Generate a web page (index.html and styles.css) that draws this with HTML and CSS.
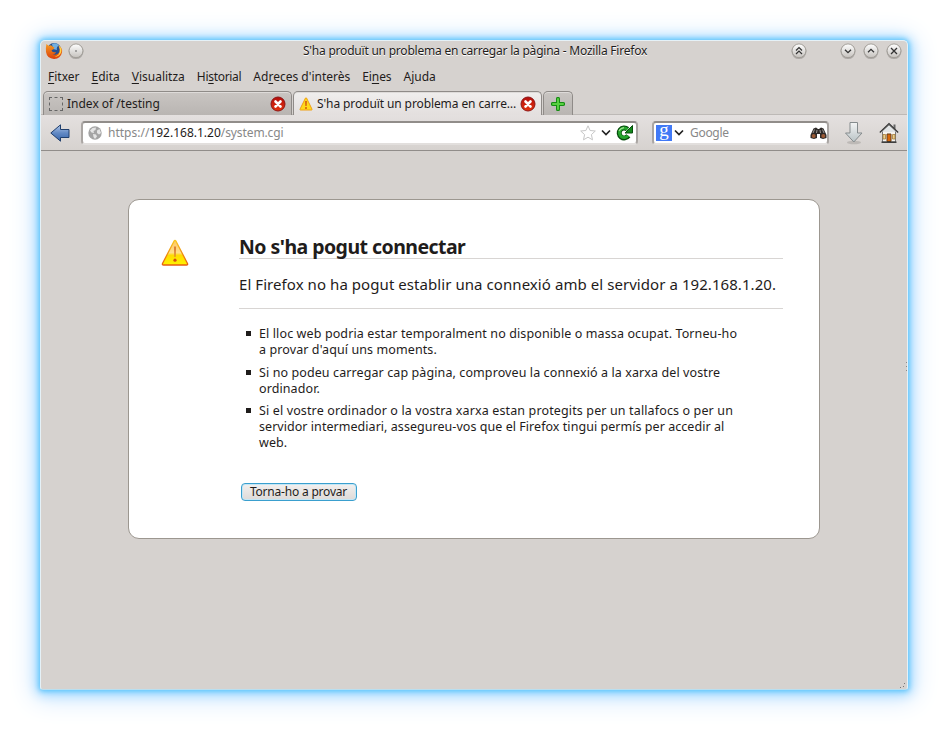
FILE: index.html
```html
<!DOCTYPE html>
<html lang="ca">
<head>
<meta charset="utf-8">
<title>S'ha produït un problema en carregar la pàgina - Mozilla Firefox</title>
<link rel="stylesheet" href="styles.css">
</head>
<body>
<svg class="defs" width="0" height="0" aria-hidden="true">
  <defs>
    <linearGradient id="gBtn" x1="0" y1="0" x2="0" y2="1"><stop offset="0" stop-color="#fff"/><stop offset="1" stop-color="#c5c1bd"/></linearGradient>
    <linearGradient id="gWarn" x1="0" y1="0" x2="0" y2="1"><stop offset="0" stop-color="#ffc861"/><stop offset=".5" stop-color="#ffdf8a"/><stop offset=".6" stop-color="#ffdc00"/><stop offset="1" stop-color="#fff200"/></linearGradient>
    <linearGradient id="gWarnEdge" x1="0" y1="0" x2="0" y2="1"><stop offset="0" stop-color="#f9c81c"/><stop offset="1" stop-color="#e65c0c"/></linearGradient>
    <linearGradient id="gBlue" x1="0" y1="0" x2="0" y2="1"><stop offset="0" stop-color="#b3c8e8"/><stop offset=".5" stop-color="#6289c4"/><stop offset="1" stop-color="#3765aa"/></linearGradient>
    <linearGradient id="gRed" x1="0" y1="0" x2="0" y2="1"><stop offset="0" stop-color="#b20d0d"/><stop offset="1" stop-color="#e3330c"/></linearGradient>
    <linearGradient id="gDown" x1="0" y1="0" x2="0" y2="1"><stop offset="0" stop-color="#f4f5f5"/><stop offset="1" stop-color="#b8c2c5"/></linearGradient>
    <linearGradient id="gFox" x1="0" y1="0" x2="0" y2="1"><stop offset="0" stop-color="#f79b22"/><stop offset="1" stop-color="#d9400c"/></linearGradient>
    <symbol id="warn" viewBox="0 0 28 28"><path d="M15 2.200 26.500 24.500Q27 26 25.500 26H2.500Q1 26 1.500 24.500L13 2.200Q14 .8 15 2.200z" fill="url(#gWarn)" stroke="url(#gWarnEdge)" stroke-width="1.300" stroke-linejoin="round"/><path d="M12.900 7.500h2.200l-.5 10.500h-1.200z" fill="#dd8133"/><circle cx="14" cy="21.200" r="1.600" fill="#d4500f"/></symbol>
    <symbol id="warnSmall" viewBox="0 0 14 14"><path d="M7.500 1 13 12.200Q13.300 13 12.500 13H1.500Q.7 13 1 12.200L6.500 1Q7 .3 7.500 1z" fill="#ffd91a" stroke="#f0a015" stroke-linejoin="round"/><path d="M6.200 4h1.600L7.600 9H6.400z" fill="#d2500c"/><circle cx="7" cy="11" r=".95" fill="#d2500c"/></symbol>
    <symbol id="close" viewBox="0 0 16 16"><circle cx="8" cy="8" r="7" fill="url(#gRed)" stroke="#8d1515"/><path d="M5.500 5.500l5 5M10.500 5.500l-5 5" stroke="#fff" stroke-width="2.600" stroke-linecap="round"/></symbol>
    <symbol id="knob" viewBox="0 0 18 18"><circle cx="9" cy="9.600" r="7.500" fill="#8b8783" opacity=".55"/><circle cx="9" cy="8.800" r="6.900" fill="url(#gBtn)" stroke="#99958f" stroke-width=".8"/></symbol>
  </defs>
</svg>
<div class="window">
  <header class="titlebar">
    <svg class="fox" width="18" height="18" viewBox="0 0 18 18"><circle cx="9.200" cy="8" r="7" fill="#254f90"/><path d="M7 2Q11-.2 14 3.500Q11 5 12 8L8 7z" fill="#71afe0"/><path d="M1.400 2 3.600 3.700 6 3.200Q8 5 9.500 5.500L8.500 7.300 6.500 8.200Q7 10.500 9.400 10.300L11 9.900Q10 12.500 7.600 12Q11.800 14 14.300 10.300Q15.400 7 13.300 3.200Q18 6 17 10.500Q15.500 17 9 16.900Q2 16.600 1 10Q.7 5 1.400 2z" fill="url(#gFox)"/><path d="M14 3.500Q17.500 7 15.800 11Q14 14.800 9.500 14.600Q15 13.500 15 8z" fill="#ffd64a"/></svg>
    <svg class="dot" width="18" height="18"><use href="#knob"/><circle cx="9" cy="9" r=".8" fill="#555"/></svg>
    <div class="caption"><span class="t t-title">S'ha produït un problema en carregar la pàgina - Mozilla Firefox</span></div>
    <svg class="k1" width="18" height="18"><use href="#knob"/><path d="M6 8.500 9 5.500l3 3M6 12l3-3 3 3" fill="none" stroke="#333" stroke-width="1.200"/></svg>
    <svg class="k2" width="18" height="18"><use href="#knob"/><path d="M6 7.700l3 3 3-3" fill="none" stroke="#333" stroke-width="1.300"/></svg>
    <svg class="k3" width="18" height="18"><use href="#knob"/><path d="M6 10.300l3-3 3 3" fill="none" stroke="#333" stroke-width="1.300"/></svg>
    <svg class="k4" width="18" height="18"><use href="#knob"/><path d="M6 6l6 6M12 6l-6 6" fill="none" stroke="#333" stroke-width="1.300"/></svg>
  </header>
  <nav class="menubar">
    <span class="t m1"><u>F</u>itxer</span><span class="t m2"><u>E</u>dita</span><span class="t m3"><u>V</u>isualitza</span><span class="t m4">Hi<u>s</u>torial</span><span class="t m5">Ad<u>r</u>eces d'interès</span><span class="t m6">Ei<u>n</u>es</span><span class="t m7">A<u>j</u>uda</span>
  </nav>
  <div class="tabs">
    <div class="tab first"><span class="blank"></span><span class="t t-tab1">Index of /testing</span><svg class="x" width="16" height="16"><use href="#close"/></svg></div>
    <div class="tab active"><svg width="14" height="14"><use href="#warnSmall"/></svg><span class="t t-tab2">S'ha produït un problema en carre…</span><svg class="x" width="16" height="16"><use href="#close"/></svg></div>
    <div class="tab plus"><svg width="14" height="14" viewBox="0 0 14 14"><path d="M7 1.800v10.400M1.800 7h10.400" stroke="#168d13" stroke-width="4" stroke-linecap="round"/><path d="M7 2v10M2 7h10" stroke="#59cf42" stroke-width="2" stroke-linecap="round"/></svg></div>
  </div>
  <div class="toolbar">
    <svg class="back" width="20" height="18" viewBox="0 0 20 18"><path d="M.8 9 10.500 .8V5.500H19v8h-8.500V17.200z" fill="url(#gBlue)" stroke="#203f6d" stroke-linejoin="round"/></svg>
    <div class="field url">
      <svg class="globe" width="14" height="14" viewBox="0 0 14 14"><circle cx="7" cy="7" r="6.700" fill="#a4a4a4"/><path d="M2 4.500 4.500 2 8 1.500 7.500 4 5.500 5 6 7 3.500 6.500zM5 8l3 .5 1 2L7 13 5.500 11zM9 4.500l2.500-1.500 1.500 4-2 1.500L9 7z" fill="#e4e4e4"/></svg>
      <span class="addr"><span class="t u1">https://</span><span class="t u2">192.168.1.20</span><span class="t u3">/system.cgi</span></span>
      <svg class="star" width="16" height="16" viewBox="0 0 16 16"><path d="M8 .8l2.100 4.700 5.200.5-3.900 3.600 1.100 5.200L8 12.200l-4.500 2.600 1.100-5.200L.7 6l5.200-.5z" fill="#fff" stroke="#c6c6c6" stroke-linejoin="round"/></svg>
      <svg class="chev" width="10" height="7"><path d="M1 1.500l4 4 4-4" fill="none" stroke="#222" stroke-width="1.700"/></svg>
      <svg class="reload" width="17" height="16" viewBox="0 0 17 16"><path d="M12.300 10.800A5 5 0 1 1 11.500 4.200" fill="none" stroke="#064d0c" stroke-width="5"/><path d="M16.500.5V8H9z" fill="#128a1b" stroke="#064d0c"/><path d="M12 10.500A4.700 4.700 0 1 1 11.500 4.500" fill="none" stroke="#24a52d" stroke-width="3"/><path d="M3 6Q4.500 3 8 2.600" fill="none" stroke="#9be08c" stroke-width="1.200"/></svg>
    </div>
    <div class="field search">
      <span class="g">g</span>
      <svg class="chev2" width="10" height="7"><path d="M1 1.500l4 4 4-4" fill="none" stroke="#222" stroke-width="1.700"/></svg>
      <span class="t t-goo">Google</span>
      <svg class="bino" width="17" height="12" viewBox="0 0 17 12"><path d="M3.500 1.500 6 .5 8 2h1L11 .5l2.500 1L16.500 8v3L13 12l-3-1V7H7v4l-3 1L.5 11V8z" fill="#2e2a28"/><path d="M4.500 2.500 3 6M12.500 2.500 14 6M7 3l-.5 3M10 3l.5 3" stroke="#9b9895" stroke-width="1"/><circle cx="3.700" cy="9" r="2" fill="#9b5b36"/><circle cx="13.300" cy="9" r="2" fill="#9b5b36"/></svg>
    </div>
    <svg class="down" width="20" height="24" viewBox="0 0 20 24"><ellipse cx="10" cy="21.500" rx="7" ry="1.800" fill="#aaa6a3" opacity=".6"/><path d="M6 1.500h7.500V12H18L9.800 21 1.500 12H6z" fill="url(#gDown)" stroke="#858b8d" stroke-linejoin="round"/></svg>
    <svg class="home" width="20" height="21" viewBox="0 0 20 21"><path d="M3.500 9 10 3l6.500 6v11h-13z" fill="#f6f4f0" stroke="#777"/><path d="M14.500 2.500h2v5l-2-2z" fill="#666"/><path d="M3 10 10 3.500 17 10z" fill="#e2e5e6"/><path d="M.8 10.500 10 1.500l9.200 9" fill="none" stroke="#333" stroke-width="1.200"/><path d="M8 12h4v7.500H8z" fill="#d9680b" stroke="#663c16"/><path d="M4 12.500H6.500V17H4zM13.500 12.500H16V17H13.500z" fill="#e8cf8f" stroke="#a77b36" stroke-width=".8"/><path d="M2.500 20.200h15" stroke="#333" stroke-width="1.400"/></svg>
  </div>
  <main class="content">
    <section class="card">
      <svg class="bigwarn" width="28" height="28"><use href="#warn"/></svg>
      <div class="message">
        <h1><span class="t t-h1">No s'ha pogut connectar</span></h1>
        <p><span class="t t-p">El Firefox no ha pogut establir una connexió amb el servidor a 192.168.1.20.</span></p>
        <ul>
          <li><span class="t l1">El lloc web podria estar temporalment no disponible o massa ocupat. Torneu-ho</span><br><span class="t l2">a provar d'aquí uns moments.</span></li>
          <li><span class="t l3">Si no podeu carregar cap pàgina, comproveu la connexió a la xarxa del vostre</span><br><span class="t l4">ordinador.</span></li>
          <li><span class="t l5">Si el vostre ordinador o la vostra xarxa estan protegits per un tallafocs o per un</span><br><span class="t l6">servidor intermediari, assegureu-vos que el Firefox tingui permís per accedir al</span><br><span class="t l7">web.</span></li>
        </ul>
        <button><span class="t t-btn">Torna-ho a provar</span></button>
      </div>
    </section>
  </main>
  <svg class="edge-grip" width="3" height="9"><path d="M1 0h1v1H1zM1 4h1v1H1zM1 8h1v1H1z" fill="#8d8986"/></svg>
  <svg class="corner-grip" width="8" height="8"><path d="M1 6h1v1H1zM4 5h1v1H4zM5 2h1v1H5z" fill="#777"/></svg>
</div>
</body>
</html>
```
FILE: styles.css
```css
* { box-sizing: border-box; }
body { margin: 0; padding: 40px; background: #fff; color: #1f1c1b; font: 12px/16px "Noto Sans", sans-serif; }
.defs { display: block; height: 0; }
svg { display: block; flex: none; }
.t { white-space: nowrap; }
.window { position: relative; width: 868px; height: 650px; display: flex; flex-direction: column; background: #d6d2cf; border: 1px solid #e5f1f7; border-bottom-color: #b9dff0; border-radius: 5px 5px 3px 3px; box-shadow: 0 0 5px 1px #58c3fb, 0 1px 12px 3px #94d7ff, 0 3px 26px 6px #cfe5ff; }
.titlebar { height: 22px; display: flex; align-items: flex-start; padding-left: 4px; }
.fox { margin-top: 1px; }
.dot { margin: 1px 0 0 4px; }
.caption { flex: 1; padding: 2px 0 0 218px; text-shadow: 0 1px #fff; }
.t-title { letter-spacing: -.22px; }
.k2 { margin-left: 31px; }
.k3, .k4 { margin-left: 5px; }
.k1, .k2, .k3, .k4 { margin-top: 1px; }
.k4 { margin-right: 4.500px; }
.menubar { height: 28px; display: flex; gap: 12px; padding: 6px 0 0 7px; }
.menubar u { text-underline-offset: 2px; }
.m4 { letter-spacing: -.3px; }
.m6 { letter-spacing: -.1px; }
.tabs { height: 24px; display: flex; padding-left: 2px; border-bottom: 1px solid #bdb9b6; }
.tab { height: 24px; display: flex; align-items: center; border: 1px solid #8f8b88; border-bottom: 0; border-radius: 5px 5px 0 0; background: linear-gradient(#c9c5c2, #b9b5b2); box-shadow: inset 0 1px #dedbd9; }
.first { width: 249px; padding: 0 5px; }
.active { width: 249px; margin-left: 1px; padding: 0 5px; background: linear-gradient(#f0eeed, #e3dfde); }
.plus { width: 30px; margin-left: 1px; justify-content: center; }
.tab .x { margin-left: auto; }
.blank { width: 14px; height: 14px; border: 1px dashed #666; margin-right: 4px; }
.t-tab2 { margin-left: 4px; letter-spacing: -.1px; }
.toolbar { height: 36px; display: flex; align-items: center; padding-left: 9px; background: linear-gradient(#e4e0df, #d6d2cf); border-bottom: 1px solid #918d8a; }
.field { height: 24px; display: flex; align-items: center; background: #fff; border: 2px solid #aaa6a3; border-top-color: #918d8a; border-bottom-color: #e2dfdd; border-radius: 4px; }
.url { width: 557px; margin-left: 11px; padding-left: 5px; color: #888; }
.addr { display: flex; margin-left: 6px; }
.u2 { color: #1f1c1b; }
.u3 { letter-spacing: -.1px; }
.star { margin-left: auto; }
.chev { margin-left: 5px; }
.reload { margin: 0 3px 0 5px; }
.search { width: 177px; margin-left: 14px; padding-left: 2px; color: #888; }
.g { width: 16px; height: 16px; background: #4179f6; color: #fff; font: 19px/10px "Liberation Serif", serif; text-align: center; }
.chev2 { margin-left: 2px; }
.t-goo { margin-left: 6px; letter-spacing: -.3px; }
.bino { margin: 0 0 0 auto; }
.down { margin-left: 15px; }
.home { margin-left: 15px; }
.content { flex: 1; padding: 48px 0 0 87px; }
.card { width: 692px; height: 340px; display: flex; background: #fff; border: 1px solid #9c9790; border-radius: 11px; padding: 0 36px 0 32px; }
.bigwarn { margin-top: 39px; }
.message { width: 544px; margin-left: 50px; }
h1 { margin: 35px 0 0; height: 24px; border-bottom: 1px solid #d8d5d3; font-size: 19.500px; line-height: 24px; letter-spacing: -.54px; }
p { margin: 0; height: 50px; padding-top: 14px; border-bottom: 1px solid #d8d5d3; font-size: 15px; line-height: 22px; letter-spacing: .065px; }
ul { margin: 17px 0 0; padding: 0 0 0 20px; list-style: none; font-size: 12.500px; line-height: 16px; letter-spacing: .1px; }
.l1 { letter-spacing: .115px; }
.l5 { letter-spacing: .133px; }
.l6 { letter-spacing: .045px; }
li { position: relative; margin-bottom: 6.500px; }
li::before { content: ""; position: absolute; left: -13px; top: 5px; width: 5px; height: 5px; background: #1f1c1b; }
button { display: flex; align-items: center; justify-content: center; width: 116px; height: 18px; margin: 32px 0 0 1.500px; padding: 0; border: 1px solid #3a9fce; border-radius: 4px; background: linear-gradient(#f2f0ef, #dedad8); box-shadow: inset 0 0 0 1px #c4e6f5; color: #1f1c1b; font: 12px/16px "Noto Sans", sans-serif; letter-spacing: -.2px; }
.edge-grip { position: absolute; right: -1px; top: 321px; }
.corner-grip { position: absolute; right: 0; bottom: 0; }
```
